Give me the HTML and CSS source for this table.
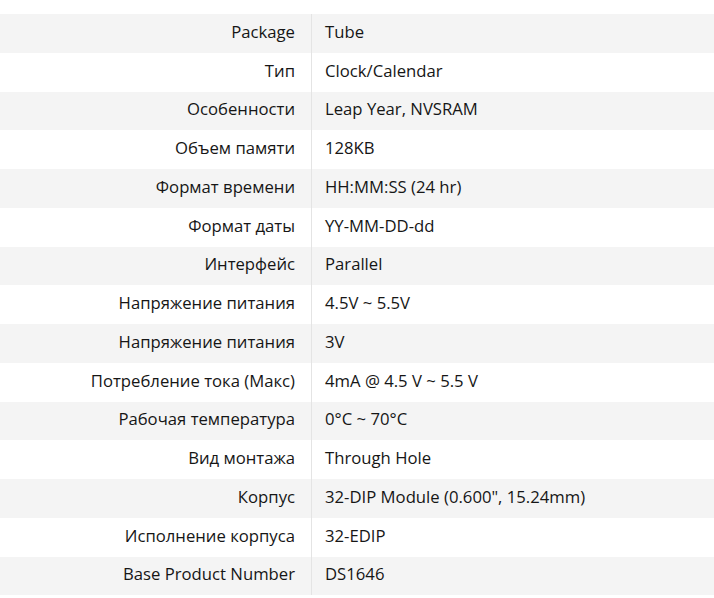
FILE: index.html
```html
<!DOCTYPE html>
<html lang="ru">
<head>
<meta charset="utf-8">
<link rel="stylesheet" href="styles.css">
</head>
<body>
<table class="specs">
<tbody>
<tr><th>Package</th><td>Tube</td></tr>
<tr><th>Тип</th><td>Clock/Calendar</td></tr>
<tr><th>Особенности</th><td>Leap Year, NVSRAM</td></tr>
<tr><th>Объем памяти</th><td>128KB</td></tr>
<tr><th>Формат времени</th><td>HH:MM:SS (24 hr)</td></tr>
<tr><th>Формат даты</th><td>YY-MM-DD-dd</td></tr>
<tr><th>Интерфейс</th><td>Parallel</td></tr>
<tr><th>Напряжение питания</th><td>4.5V ~ 5.5V</td></tr>
<tr><th>Напряжение питания</th><td>3V</td></tr>
<tr><th>Потребление тока (Макс)</th><td>4mA @ 4.5 V ~ 5.5 V</td></tr>
<tr><th>Рабочая температура</th><td>0°C ~ 70°C</td></tr>
<tr><th>Вид монтажа</th><td>Through Hole</td></tr>
<tr><th>Корпус</th><td>32-DIP Module (0.600", 15.24mm)</td></tr>
<tr><th>Исполнение корпуса</th><td>32-EDIP</td></tr>
<tr><th>Base Product Number</th><td>DS1646</td></tr>
</tbody>
</table>
</body>
</html>
```
FILE: styles.css
```css
html, body {
  margin: 0;
  padding: 0;
  background: #ffffff;
}
body {
  padding-top: 14px;
  font-family: "Open Sans", "Noto Sans", sans-serif;
  font-size: 16.7px;
  color: #161616;
}
.specs {
  width: 100%;
  border-collapse: collapse;
  border-spacing: 0;
}
.specs tr {
  height: 38.75px;
}
.specs tr:nth-child(odd) {
  background: #f4f4f4;
}
.specs th,
.specs td {
  padding: 0 0 3px 0;
  font-weight: 400;
  line-height: 24px;
  vertical-align: middle;
}
.specs th {
  width: 295px;
  padding-right: 16px;
  text-align: right;
  border-right: 1px solid #e4e4e4;
}
.specs td {
  padding-left: 13px;
  text-align: left;
}
```
